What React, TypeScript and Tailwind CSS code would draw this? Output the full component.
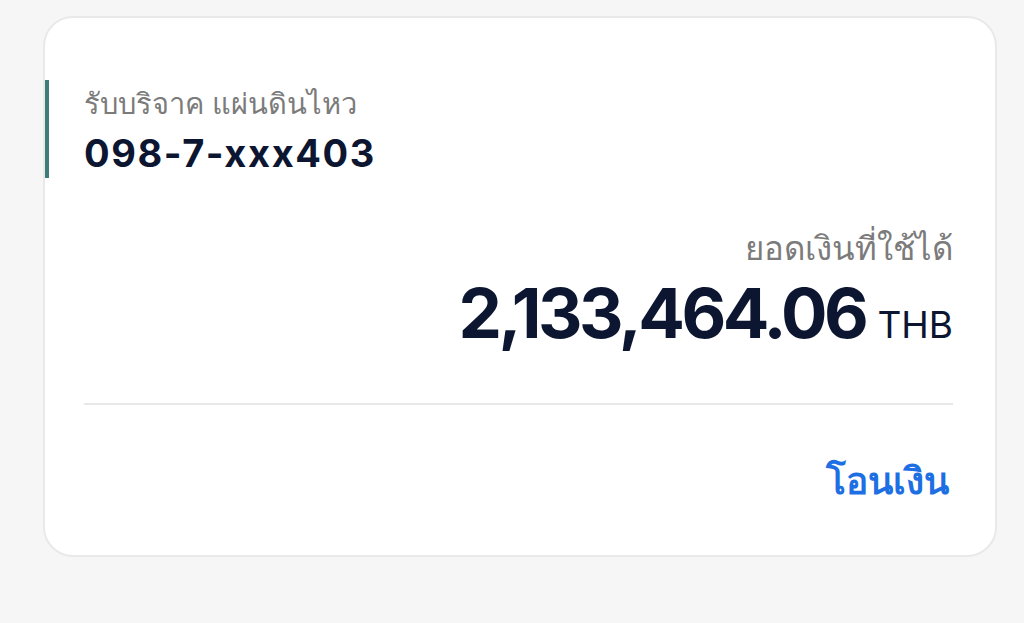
export default function App() {
  return (
    <div
      className="min-h-[623px] w-full bg-[#f6f6f6] pt-[16px] pl-[43px] pr-[28px]"
      style={{ fontFamily: 'Inter, "Noto Sans", "Liberation Sans", sans-serif' }}
    >
      <div className="w-[954px] h-[541px] rounded-[30px] border-2 border-[#e9e9e9] bg-white pt-[62px] pr-[42px] pb-[45px]">
        <div className="flex">
          <div className="w-[4px] h-[98px] bg-[#3f7b79]" />
          <div className="pl-[35px] flex flex-col">
            <div className="h-[48px] leading-[48px] text-[29px] text-[#7b7b7b]">รับบริจาค แผ่นดินไหว</div>
            <div className="h-[50px] leading-[50px] text-[38px] font-bold tracking-[1.6px] text-[#0c1631]">098-7-xxx403</div>
          </div>
        </div>

        <div className="pl-[39px] flex flex-col items-end">
          <div className="mt-[48px] h-[44px] leading-[44px] text-[33px] text-[#7b7b7b]">ยอดเงินที่ใช้ได้</div>
          <div className="mt-[3px] flex items-baseline gap-[12px] h-[80px] leading-[80px]">
            <span className="text-[69px] font-bold tracking-[-3.5px] text-[#0c1631]">2,133,464.06</span>
            <span className="text-[37px] text-[#0c1631]">THB</span>
          </div>
        </div>

        <div className="ml-[39px] mt-[50px] h-[2px] bg-[#e8e8e8]" />

        <div className="flex justify-end">
          <button className="mt-[50px] mr-[4px] h-[52px] leading-[52px] text-[37px] font-bold text-[#1d6fe3]">โอนเงิน</button>
        </div>
      </div>
    </div>
  );
}
